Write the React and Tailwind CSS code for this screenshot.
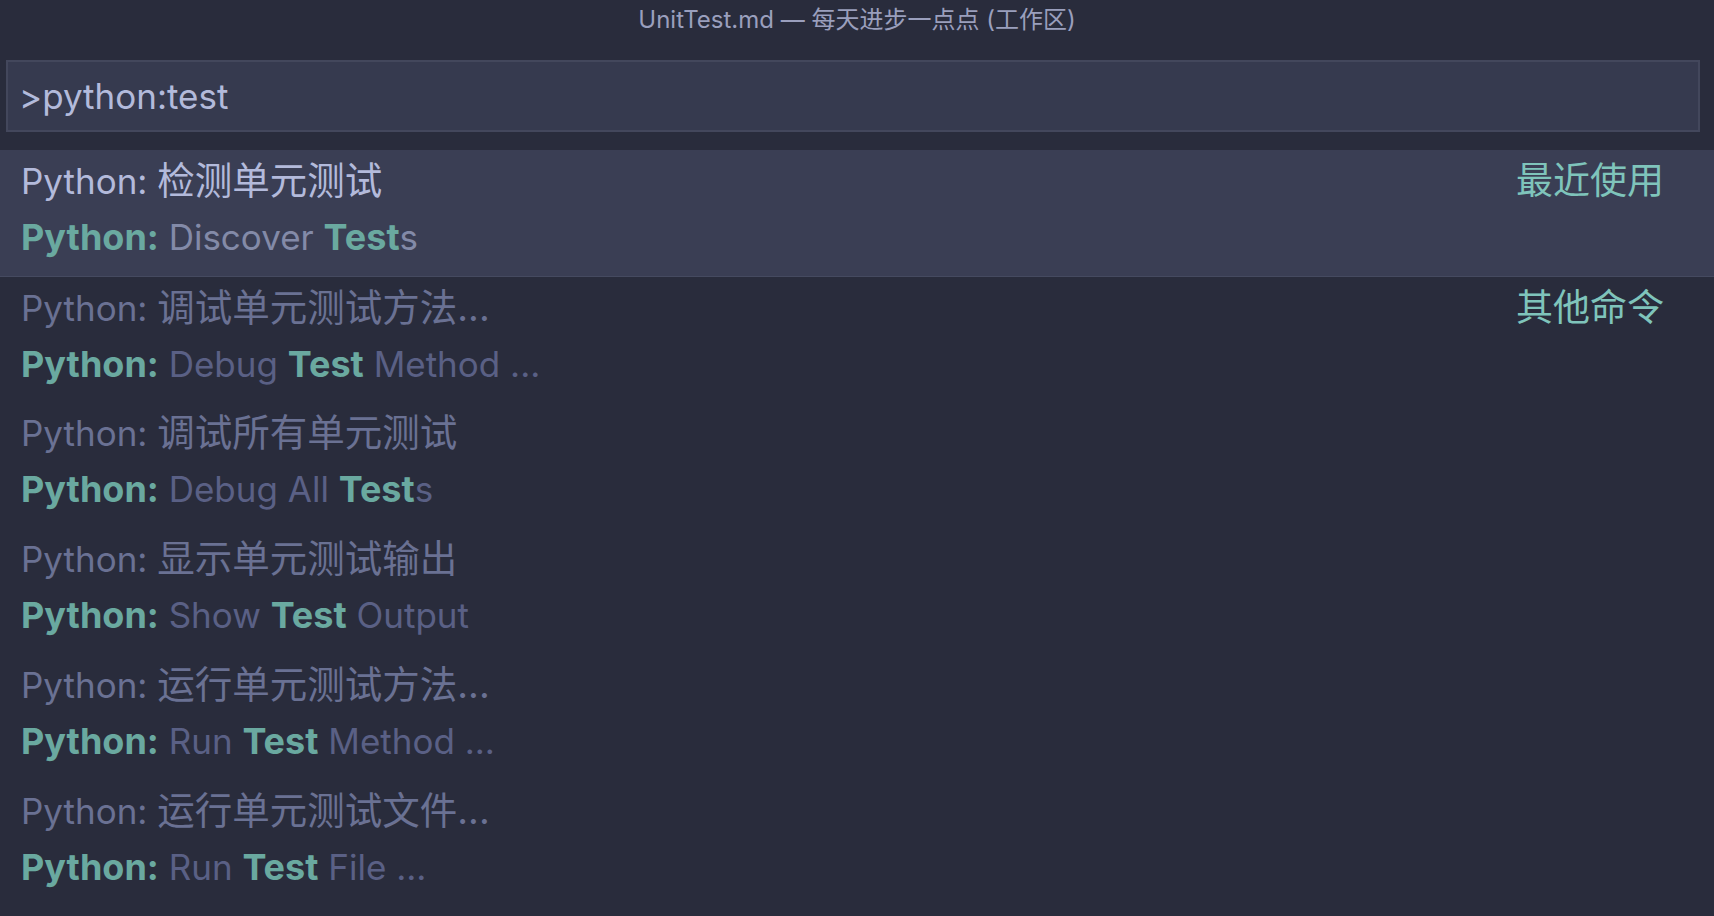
import React from "react";

const FONT = { fontFamily: 'Inter, "Noto Sans CJK SC", sans-serif' };

const items = [
  { zh: "检测单元测试", en: [["Python:", true], [" Discover ", false], ["Test", true], ["s", false]], label: "最近使用", selected: true },
  { zh: "调试单元测试方法...", en: [["Python:", true], [" Debug ", false], ["Test", true], [" Method ...", false]], label: "其他命令", border: true },
  { zh: "调试所有单元测试", en: [["Python:", true], [" Debug All ", false], ["Test", true], ["s", false]] },
  { zh: "显示单元测试输出", en: [["Python:", true], [" Show ", false], ["Test", true], [" Output", false]] },
  { zh: "运行单元测试方法...", en: [["Python:", true], [" Run ", false], ["Test", true], [" Method ...", false]] },
  { zh: "运行单元测试文件...", en: [["Python:", true], [" Run ", false], ["Test", true], [" File ...", false]] },
];

function Item({ it }) {
  return (
    <div
      className={
        "flex h-[126px] pl-[21px] pr-[50px] pt-[3px] " +
        (it.selected ? "bg-[#3a3e54]" : "") +
        (it.border ? " border-t border-[#454a60]" : "")
      }
    >
      <div className="flex-1 flex flex-col">
        <div className={"h-[56px] leading-[56px] text-[35px] whitespace-pre " + (it.selected ? "text-[#b3badb]" : "text-[#6a7193]")}>
          Python: <span className="text-[37.5px]">{it.zh}</span>
        </div>
        <div className="h-[56px] leading-[56px] text-[35px] whitespace-pre">
          {it.en.map(([t, b], i) => (
            <span
              key={i}
              className={
                b
                  ? "font-bold text-[36px] text-[#6aa9a0]"
                  : it.selected
                  ? "text-[#838aa8]"
                  : "text-[#5a6085]"
              }
            >
              {t}
            </span>
          ))}
        </div>
      </div>
      {it.label && (
        <div className="h-[56px] leading-[56px] text-[37px] text-[#7fc4bb]">{it.label}</div>
      )}
    </div>
  );
}

export default function App() {
  return (
    <div className="w-[1714px] h-[916px] bg-[#292c3c] overflow-hidden" style={FONT}>
      <div className="h-[40px] flex items-center justify-center text-[24px] text-[#9a9fbd]">
        UnitTest.md — 每天进步一点点 (工作区)
      </div>
      <div className="px-[6px] pt-[20px] pr-[14px]">
        <div className="h-[72px] bg-[#363a4f] border-2 border-[#43475c] flex items-center pl-[11px] text-[35px] text-[#b3badb]">
          &gt;python:test
        </div>
      </div>
      <div className="mt-[18px]">
        {items.map((it, i) => (
          <Item key={i} it={it} />
        ))}
      </div>
    </div>
  );
}
